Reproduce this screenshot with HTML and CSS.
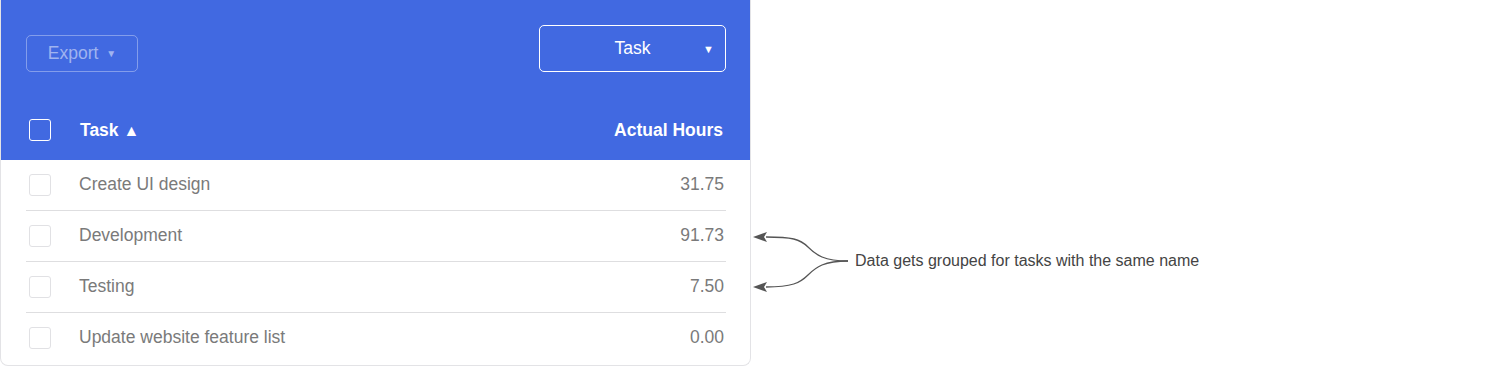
FILE: index.html
```html
<!DOCTYPE html>
<html>
<head>
<meta charset="utf-8">
<link rel="stylesheet" href="styles.css">
</head>
<body>
<div class="page">
  <div class="card">
    <div class="head">
      <div class="toolbar">
        <button class="export">Export <span class="caret">▼</span></button>
        <div class="select"><span class="select-label">Task</span><span class="select-caret">▼</span></div>
      </div>
      <div class="colrow">
        <span class="check check-head"></span>
        <span class="col-task">Task <span class="sort">▲</span></span>
        <span class="col-hours">Actual Hours</span>
      </div>
    </div>
    <div class="rows">
      <div class="row"><span class="check"></span><span class="name">Create UI design</span><span class="num">31.75</span></div>
      <div class="row"><span class="check"></span><span class="name">Development</span><span class="num">91.73</span></div>
      <div class="row"><span class="check"></span><span class="name">Testing</span><span class="num">7.50</span></div>
      <div class="row"><span class="check"></span><span class="name">Update website feature list</span><span class="num">0.00</span></div>
    </div>
  </div>
  <div class="note">
    <svg class="arrows" width="100" height="75" viewBox="0 0 100 75">
      <path d="M96,36 C72,36 64,30 56,22 C48,14 40,12 14,12" fill="none" stroke="#555" stroke-width="1.3"/>
      <path d="M96,36 C72,36 64,42 56,50 C48,58 40,62 14,62" fill="none" stroke="#555" stroke-width="1.3"/>
      <polygon points="1,12 15,7 12,12 15,17" fill="#555"/>
      <polygon points="1,62 15,57 12,62 15,67" fill="#555"/>
    </svg>
    <span class="note-text">Data gets grouped for tasks with the same name</span>
  </div>
</div>
</body>
</html>
```
FILE: styles.css
```css
html, body {
  margin: 0;
  padding: 0;
  background: #fff;
}
body {
  font-family: "Liberation Sans", Arial, sans-serif;
}
.page {
  position: relative;
  width: 1508px;
  height: 366px;
}
.card {
  width: 751px;
  height: 366px;
  box-sizing: border-box;
  border: 1px solid #e3e3e6;
  border-top: none;
  border-radius: 0 0 8px 8px;
  background: #fff;
  overflow: hidden;
}
.head {
  background: #4169e1;
  height: 160px;
  margin: 0 -1px;
  display: flex;
  flex-direction: column;
}
.toolbar {
  height: 100px;
  display: flex;
  justify-content: space-between;
  align-items: flex-start;
  padding: 25px 25px 0 26px;
  box-sizing: border-box;
}
.export {
  margin-top: 10px;
  width: 112px;
  height: 37px;
  border: 1px solid rgba(255,255,255,0.35);
  border-radius: 5px;
  background: transparent;
  color: rgba(255,255,255,0.5);
  font-family: "Liberation Sans", Arial, sans-serif;
  font-size: 17.5px;
  padding: 0;
  display: flex;
  align-items: center;
  justify-content: center;
  gap: 8px;
}
.caret {
  font-size: 10px;
}
.select {
  width: 187px;
  height: 47px;
  box-sizing: border-box;
  border: 1px solid #fff;
  border-radius: 5px;
  display: flex;
  align-items: center;
  color: #fff;
  font-size: 17.5px;
  padding: 0 11px 0 0;
}
.select-label {
  flex: 1;
  text-align: center;
  padding-left: 22px;
  margin-top: -1px;
}
.select-caret {
  font-size: 11px;
}
.colrow {
  height: 60px;
  display: flex;
  align-items: center;
  padding: 0 28px 0 29px;
  color: #fff;
  font-weight: bold;
  font-size: 17.5px;
}
.check {
  width: 22px;
  height: 22px;
  box-sizing: border-box;
  border: 1px solid #e1e1e4;
  border-radius: 3px;
  flex: none;
  background: #fff;
}
.check-head {
  border-color: #fff;
  background: transparent;
}
.col-task {
  margin-left: 29px;
  flex: 1;
}
.sort {
  font-size: 16px;
}
.col-hours {
  text-align: right;
}
.rows {
  padding: 0 24px 0 25px;
}
.row {
  height: 50px;
  display: flex;
  align-items: center;
  border-bottom: 1px solid #dedee0;
  padding: 0 3px;
  color: #7a7a7a;
  font-size: 17.5px;
}
.row:last-child {
  border-bottom: none;
}
.name {
  margin-left: 28px;
  flex: 1;
  margin-top: -2px;
}
.num {
  text-align: right;
  margin-top: -2px;
  margin-right: -1px;
}
.note {
  position: absolute;
  left: 752px;
  top: 225px;
  display: flex;
  align-items: flex-start;
}
.arrows {
  display: block;
}
.note-text {
  margin-left: 3px;
  margin-top: 27px;
  font-size: 16px;
  color: #444;
  white-space: nowrap;
}
```
